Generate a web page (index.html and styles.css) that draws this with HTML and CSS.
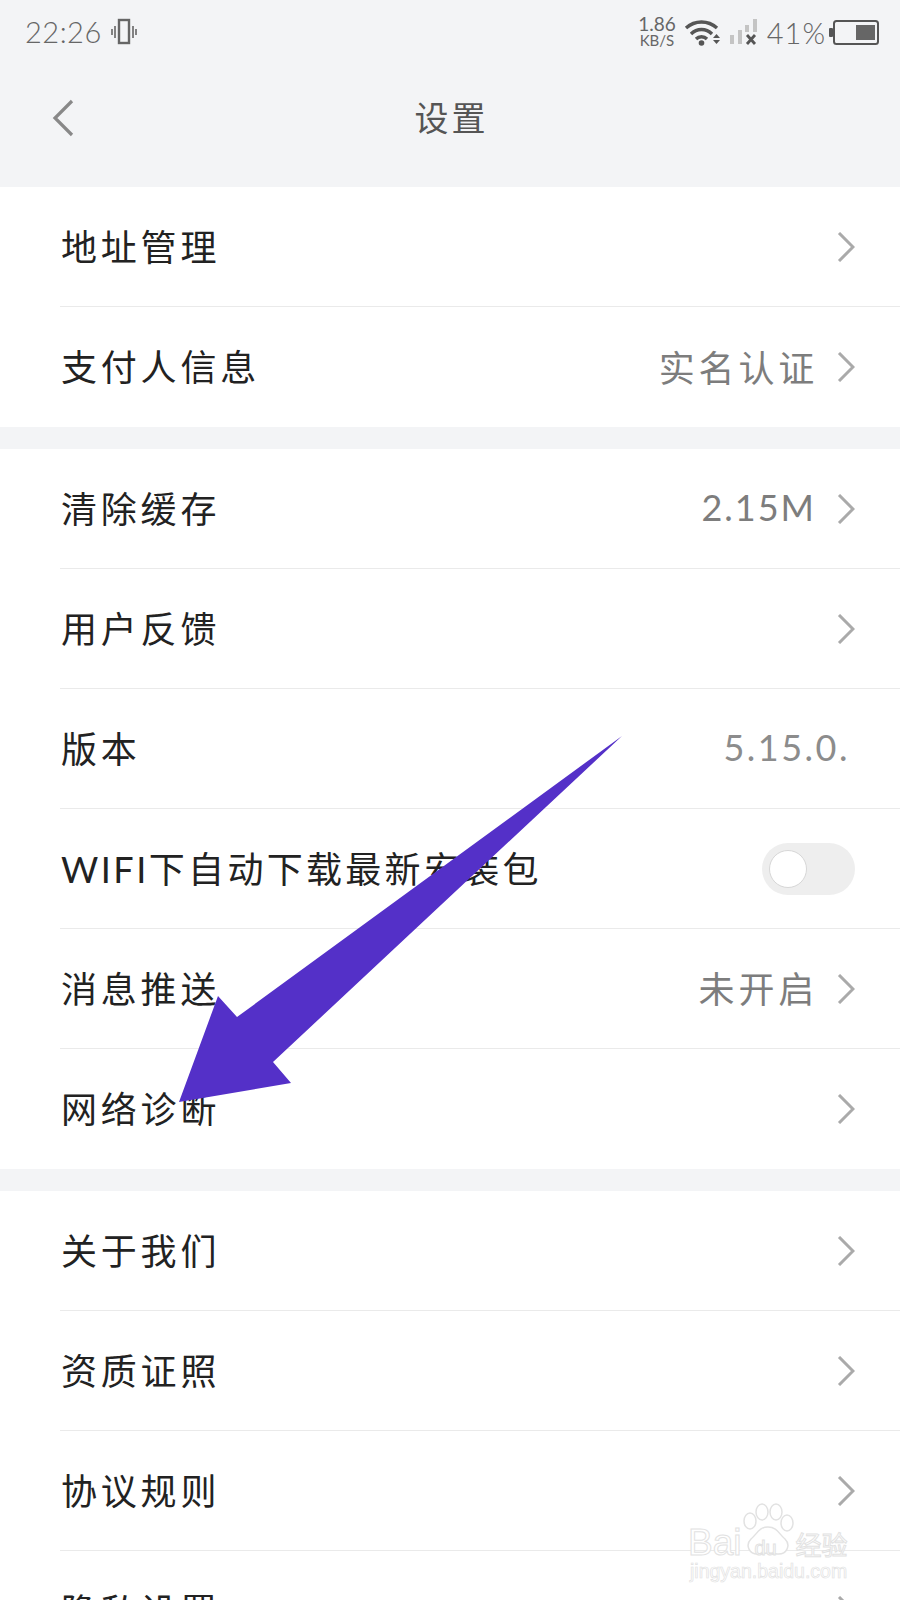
FILE: index.html
```html
<!DOCTYPE html>
<html lang="zh-CN">
<head>
    <meta charset="UTF-8" />
    <title>设置</title>
    <link rel="stylesheet" href="styles.css">
</head>
<body>
    <div class="page">
        <header class="top">
            <div class="status">
                <div class="status-left">
                    <span class="clock">22:26</span>
                    <svg class="vibrate" width="28" height="28" viewBox="0 0 28 28" fill="none" stroke="#666">
                        <rect x="9" y="2" width="10" height="23" stroke-width="2.4"/>
                        <path d="M5 8v12M2 11v6M23 8v12M26 11v6" stroke-width="1.6"/>
                    </svg>
                </div>
                <div class="status-right">
                    <div class="speed"><span class="speed-num">1.86</span><span class="speed-unit">KB/S</span></div>
                    <svg class="wifi" width="37" height="27" viewBox="0 0 37 27" fill="none" stroke="#555" stroke-width="3.4">
                        <path d="M2 9C11 1 24 1 33 9M7 15C13 9 22 9 28 15M12 20C15 17 20 17 23 20"/>
                        <circle cx="17.500" cy="24" r="2.800" fill="#555" stroke="none"/>
                        <path d="M29 19h7l-3.500-4zM29 21h7l-3.500 4z" fill="#555" stroke="none"/>
                    </svg>
                    <svg class="signal" width="28" height="27" viewBox="0 0 28 27">
                        <rect x="0" y="16" width="4" height="9" fill="#c4c4c4"/>
                        <rect x="8" y="11" width="4" height="14" fill="#c4c4c4"/>
                        <rect x="15" y="6" width="4" height="7" fill="#c4c4c4"/>
                        <rect x="23" y="0" width="4" height="13" fill="#c4c4c4"/>
                        <path d="M17 16l8 9M25 16l-8 9" stroke="#555" stroke-width="2.800"/>
                    </svg>
                    <span class="percent">41%</span>
                    <svg class="battery" width="51" height="27" viewBox="0 0 51 27" fill="none">
                        <rect x="5" y="2" width="44" height="23" rx="2.500" stroke="#555" stroke-width="2"/>
                        <rect x="0" y="9" width="4" height="9" rx="1" fill="#555"/>
                        <rect x="27" y="6" width="19" height="15" fill="#666"/>
                    </svg>
                </div>
            </div>
            <nav class="nav">
                <svg class="back" width="24" height="38" viewBox="0 0 24 38" fill="none" stroke="#888" stroke-width="3.200">
                    <path d="M21 2L4 19l17 17"/>
                </svg>
                <h1 class="title">设置</h1>
            </nav>
        </header>

        <section class="group">
            <div class="row"><span class="label">地址管理</span><span class="right"><svg class="chev" viewBox="0 0 18 30"><path d="M2 1l14 14L2 29"/></svg></span></div>
            <div class="row"><span class="label">支付人信息</span><span class="right"><span class="value">实名认证</span><svg class="chev" viewBox="0 0 18 30"><path d="M2 1l14 14L2 29"/></svg></span></div>
        </section>

        <section class="group">
            <div class="row"><span class="label">清除缓存</span><span class="right"><span class="value size">2.15M</span><svg class="chev" viewBox="0 0 18 30"><path d="M2 1l14 14L2 29"/></svg></span></div>
            <div class="row"><span class="label">用户反馈</span><span class="right"><svg class="chev" viewBox="0 0 18 30"><path d="M2 1l14 14L2 29"/></svg></span></div>
            <div class="row"><span class="label">版本</span><span class="right"><span class="value version">5.15.0.</span></span></div>
            <div class="row"><span class="label wifi-label"><span class="latin">WIFI</span>下自动下载最新安装包</span><span class="right"><span class="toggle"><span class="knob"></span></span></span></div>
            <div class="row"><span class="label">消息推送</span><span class="right"><span class="value">未开启</span><svg class="chev" viewBox="0 0 18 30"><path d="M2 1l14 14L2 29"/></svg></span></div>
            <div class="row"><span class="label">网络诊断</span><span class="right"><svg class="chev" viewBox="0 0 18 30"><path d="M2 1l14 14L2 29"/></svg></span></div>
        </section>

        <section class="group">
            <div class="row"><span class="label">关于我们</span><span class="right"><svg class="chev" viewBox="0 0 18 30"><path d="M2 1l14 14L2 29"/></svg></span></div>
            <div class="row"><span class="label">资质证照</span><span class="right"><svg class="chev" viewBox="0 0 18 30"><path d="M2 1l14 14L2 29"/></svg></span></div>
            <div class="row"><span class="label">协议规则</span><span class="right"><svg class="chev" viewBox="0 0 18 30"><path d="M2 1l14 14L2 29"/></svg></span></div>
            <div class="row"><span class="label">隐私设置</span><span class="right"><svg class="chev" viewBox="0 0 18 30"><path d="M2 1l14 14L2 29"/></svg></span></div>
        </section>

        <!-- purple arrow drawn over the list -->
        <svg class="arrow" width="900" height="1600" viewBox="0 0 900 1600">
            <path d="M622 736L273 1062L291 1083L179 1102L218 996L237 1017Z" fill="#5430c8"/>
        </svg>

        <div class="mark">
            <svg class="paw" width="56" height="54" viewBox="0 0 56 54" fill="#fff" stroke="#e2e2e2" stroke-width="1.500">
                <ellipse cx="10" cy="18" rx="6" ry="8"/>
                <ellipse cx="22" cy="9" rx="6" ry="8"/>
                <ellipse cx="36" cy="9" rx="6" ry="8"/>
                <ellipse cx="47" cy="20" rx="6" ry="8"/>
                <path d="M28 24C19 24 17 31 11 36C5 42 9 52 19 51C24 50 32 50 37 51C47 52 51 42 45 36C39 31 37 24 28 24Z"/>
            </svg>
            <div class="mark-brand">
                <span>Bai</span><span class="mark-du">du</span><span class="mark-cn">经验</span>
            </div>
            <div class="mark-url">jingyan.baidu.com</div>
        </div>
    </div>
</body>
</html>
```

FILE: styles.css
```css
* {
    box-sizing: border-box;
}
html, body {
    margin: 0;
    padding: 0;
}
body {
    background-color: rgb(243, 244, 246);
    font-family: Lato, "Noto Sans CJK SC", sans-serif;
}
.page {
    position: relative;
    width: 900px;
    height: 1600px;
    overflow: hidden;
}
.top {
    height: 187px;
}
.status {
    display: flex;
    justify-content: space-between;
    align-items: center;
    height: 64px;
    padding: 0 20px 0 25px;
    color: rgb(102, 102, 102);
}
.status-left, .status-right {
    display: flex;
    align-items: center;
}
.clock {
    font-size: 29px;
    letter-spacing: 0.500px;
    font-weight: 300;
    margin-bottom: 2px;
}
.vibrate {
    margin-left: 8px;
}
.speed {
    display: flex;
    flex-direction: column;
    align-items: center;
    margin: 0 8px 3px 0;
}
.speed-num {
    font-size: 19px;
    line-height: 19px;
}
.speed-unit {
    font-size: 15px;
    line-height: 15px;
}
.signal {
    margin-left: 9px;
}
.percent {
    margin-left: 9px;
    font-size: 29px;
    font-weight: 300;
    letter-spacing: 1px;
}
.battery {
    margin-left: 3px;
}
.nav {
    display: flex;
    align-items: center;
    justify-content: center;
    position: relative;
    height: 108px;
    padding: 0 0 4px 3px;
}
.back {
    position: absolute;
    left: 51px;
    top: 35px;
}
.title {
    margin: 0;
    font-size: 34px;
    font-weight: 400;
    letter-spacing: 3px;
    color: rgb(85, 85, 85);
}
.group {
    background-color: rgb(255, 255, 255);
    margin-bottom: 22px;
    padding-left: 60px;
}
.row {
    display: flex;
    justify-content: space-between;
    align-items: center;
    height: 120px;
    padding-right: 45px;
    border-bottom: 1px solid rgb(234, 234, 234);
}
.row:last-child {
    border-bottom: none;
}
.label {
    margin: 0 0 4px 1px;
    font-size: 36px;
    letter-spacing: 3.800px;
    color: rgb(34, 34, 34);
}
.wifi-label {
    letter-spacing: 3.300px;
}
.latin {
    letter-spacing: 2.500px;
}
.right {
    display: flex;
    align-items: center;
}
.value {
    font-size: 36px;
    letter-spacing: 3.800px;
    color: rgb(125, 125, 125);
    margin: 0 19px 3px 0;
}
.size {
    letter-spacing: 2px;
    margin-right: 21px;
}
.version {
    letter-spacing: 2.500px;
    margin-right: 5px;
    color: rgb(140, 140, 140);
}
.chev {
    width: 18px;
    height: 30px;
    fill: none;
    stroke: rgb(170, 170, 170);
    stroke-width: 3;
}
.toggle {
    display: block;
    position: relative;
    width: 93px;
    height: 52px;
    border-radius: 26px;
    background-color: rgb(238, 238, 238);
}
.knob {
    position: absolute;
    left: 7px;
    top: 7px;
    width: 38px;
    height: 38px;
    border-radius: 50%;
    background-color: rgb(255, 255, 255);
    border: 1px solid rgb(215, 215, 215);
}
.arrow {
    position: absolute;
    left: 0;
    top: 0;
}
.mark {
    position: absolute;
    left: 688px;
    top: 1503px;
    width: 170px;
    height: 80px;
}
.paw {
    position: absolute;
    left: 52px;
    top: 0;
}
.mark-brand {
    position: absolute;
    left: 0;
    top: 18px;
    white-space: nowrap;
    font-family: "Liberation Sans", "Noto Sans CJK SC", sans-serif;
    font-size: 37px;
    line-height: 44px;
    color: rgb(255, 255, 255);
    -webkit-text-stroke: 1px rgb(226, 226, 226);
}
.mark-du {
    display: inline-block;
    width: 54px;
    padding-left: 13px;
    font-size: 20px;
}
.mark-cn {
    font-size: 26px;
}
.mark-url {
    position: absolute;
    left: 2px;
    top: 56px;
    white-space: nowrap;
    font-family: "Liberation Sans", sans-serif;
    font-size: 19.500px;
    line-height: 24px;
    color: rgb(255, 255, 255);
    -webkit-text-stroke: 0.700px rgb(226, 226, 226);
}
```
